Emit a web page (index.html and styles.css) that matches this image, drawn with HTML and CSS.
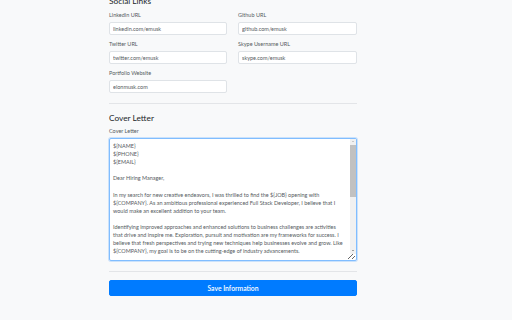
FILE: index.html
```html
<!DOCTYPE html>
<html>
<head>
<meta charset="utf-8">
<link rel="stylesheet" href="styles.css">
</head>
<body>
<div class="page">
  <form class="form">
    <h2 class="section-title top">Social Links</h2>
    <div class="grid">
      <div class="group">
        <label class="label">Linkedin URL</label>
        <input class="input" value="linkedin.com/emusk">
      </div>
      <div class="group">
        <label class="label">Github URL</label>
        <input class="input" value="github.com/emusk">
      </div>
      <div class="group">
        <label class="label">Twitter URL</label>
        <input class="input" value="twitter.com/emusk">
      </div>
      <div class="group">
        <label class="label">Skype Username URL</label>
        <input class="input" value="skype.com/emusk">
      </div>
      <div class="group">
        <label class="label">Portfolio Website</label>
        <input class="input" value="elonmusk.com">
      </div>
    </div>
    <hr class="divider">
    <h2 class="section-title">Cover Letter</h2>
    <label class="label">Cover Letter</label>
    <div class="ta-wrap">
      <textarea class="textarea">${NAME}
${PHONE}
${EMAIL}

Dear Hiring Manager,

In my search for new creative endeavors, I was thrilled to find the ${JOB} opening with ${COMPANY}. As an ambitious professional experienced Full Stack Developer, I believe that I would make an excellent addition to your team.

Identifying improved approaches and enhanced solutions to business challenges are activities that drive and inspire me. Exploration, pursuit and motivation are my frameworks for success. I believe that fresh perspectives and trying new techniques help businesses evolve and grow. Like ${COMPANY}, my goal is to be on the cutting-edge of industry advancements.

I am confident that my skills and experience make me a strong candidate for this position. I would welcome the opportunity to discuss how I can contribute to the continued success of ${COMPANY}.

Thank you for your time and consideration. I look forward to hearing from you.

Sincerely,
${NAME}</textarea>
      <div class="scrollbar" aria-hidden="true">
        <span class="arrow up"></span>
        <span class="track"><span class="thumb"></span></span>
        <span class="arrow down"></span>
      </div>
    </div>
    <hr class="divider bottom">
    <button type="button" class="btn">Save Information</button>
  </form>
</div>
</body>
</html>
```

FILE: styles.css
```css
* { box-sizing: border-box; }
html, body {
  margin: 0;
  padding: 0;
  background: #f8f9fa;
  font-family: Lato, "Noto Sans", sans-serif;
  color: #212529;
  overflow: hidden;
}
.page {
  width: 512px;
  height: 320px;
  background: #f8f9fa;
}
.form {
  margin: -5px 0 0 109px;
  width: 248px;
  display: flex;
  flex-direction: column;
}
.section-title {
  margin: 0 0 3px 0;
  font-size: 8.3px;
  line-height: 12px;
  font-weight: 400;
  color: #212529;
}
.section-title.top {
  margin-bottom: 4px;
}
.grid {
  display: grid;
  grid-template-columns: 118px 119px;
  column-gap: 11px;
}
.group {
  display: flex;
  flex-direction: column;
  margin-bottom: 5px;
}
.label {
  display: block;
  font-size: 5.5px;
  line-height: 8px;
  color: #555b61;
  margin-bottom: 3px;
}
.input {
  height: 13px;
  border: 1px solid #dfe3e7;
  border-radius: 2px;
  background: #fff;
  padding: 0 3px;
  font-family: Lato, "Noto Sans", sans-serif;
  font-size: 5.5px;
  color: #555b61;
  outline: none;
  width: 100%;
}
.divider {
  margin: 5px 0 8px 0;
  border: 0;
  border-top: 1px solid #e3e5e8;
  width: 100%;
}
.divider.bottom {
  margin: 10px 0 8px 0;
}
.ta-wrap {
  position: relative;
  height: 123px;
}
.textarea {
  display: block;
  height: 123px;
  width: 100%;
  border: 1px solid #80bdff;
  box-shadow: 0 0 0 1px rgba(0, 123, 255, 0.18);
  border-radius: 2px;
  background: #fff;
  padding: 3px 10px 3px 3px;
  font-family: Lato, "Noto Sans", sans-serif;
  font-size: 5.48px;
  line-height: 8.1px;
  color: #555b61;
  outline: none;
  resize: vertical;
  overflow: hidden;
}
.scrollbar {
  position: absolute;
  top: 1px;
  right: 1px;
  bottom: 7px;
  width: 6px;
  background: #f1f1f1;
  display: flex;
  flex-direction: column;
  pointer-events: none;
}
.arrow {
  height: 6px;
  flex: none;
  position: relative;
}
.arrow::after {
  content: "";
  position: absolute;
  left: 1.5px;
  top: 2px;
  border-left: 1.5px solid transparent;
  border-right: 1.5px solid transparent;
}
.arrow.up::after { border-bottom: 1.5px solid #a3a3a3; }
.arrow.down::after { border-top: 1.5px solid #505050; }
.track {
  flex: 1;
  display: flex;
  flex-direction: column;
}
.thumb {
  margin-top: 0;
  height: 52px;
  background: #c1c1c1;
}
.btn {
  height: 16px;
  width: 100%;
  border: 1px solid #007bff;
  border-radius: 2px;
  background: #007bff;
  color: #fff;
  font-family: Lato, "Noto Sans", sans-serif;
  font-size: 6.8px;
  font-weight: 600;
  padding: 0;
}
```
